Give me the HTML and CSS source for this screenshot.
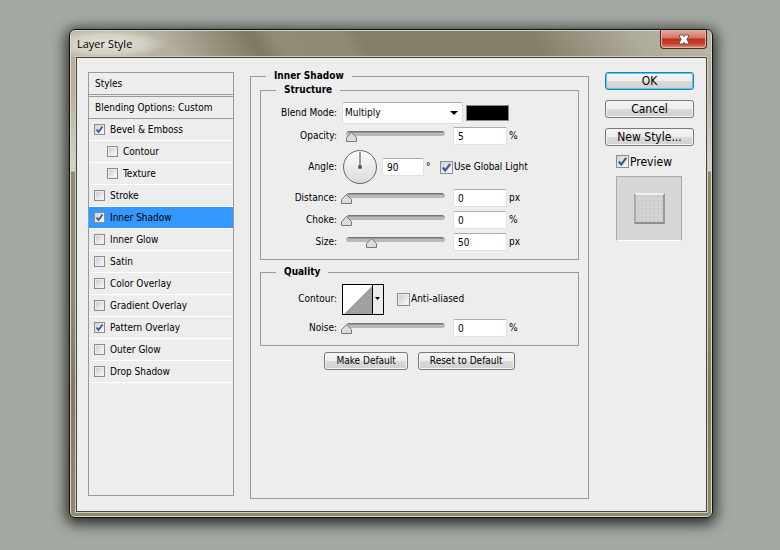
FILE: index.html
```html
<!DOCTYPE html>
<html lang="en">
<head>
<meta charset="utf-8">
<meta name="viewport" content="width=device-width, initial-scale=1">
<title>Layer Style</title>
<link rel="stylesheet" href="styles.css">
</head>
<body>
<main class="window">
  <header class="titlebar">
    <h1 class="title">Layer Style</h1>
    <button class="close" type="button" aria-label="Close">
      <svg width="12" height="11" viewBox="0 0 12 11"><path d="M1.500 1h3.500L6 2.700 7 1h3.500v2L8.700 5.500l1.800 2.500v2H7L6 8.300 5 10H1.500V8l1.800-2.500L1.500 3z" fill="#fff" stroke="#565a6b"/></svg>
    </button>
  </header>
  <form class="content">
    <nav class="styles" aria-label="Styles">
      <h2 class="styles-head">Styles</h2>
      <a class="blending" href="#">Blending Options: Custom</a>
      <ul class="effects">
        <li class="effect"><label><input type="checkbox" checked>Bevel &amp; Emboss</label></li>
        <li class="effect sub"><label><input type="checkbox">Contour</label></li>
        <li class="effect sub"><label><input type="checkbox">Texture</label></li>
        <li class="effect"><label><input type="checkbox">Stroke</label></li>
        <li class="effect selected"><label><input type="checkbox" checked>Inner Shadow</label></li>
        <li class="effect"><label><input type="checkbox">Inner Glow</label></li>
        <li class="effect"><label><input type="checkbox">Satin</label></li>
        <li class="effect"><label><input type="checkbox">Color Overlay</label></li>
        <li class="effect"><label><input type="checkbox">Gradient Overlay</label></li>
        <li class="effect"><label><input type="checkbox" checked>Pattern Overlay</label></li>
        <li class="effect"><label><input type="checkbox">Outer Glow</label></li>
        <li class="effect"><label><input type="checkbox">Drop Shadow</label></li>
      </ul>
    </nav>

    <fieldset class="settings">
      <legend>Inner Shadow</legend>
      <fieldset class="group structure">
        <legend>Structure</legend>
        <div class="row blend-row">
          <label class="name" for="blend">Blend Mode:</label>
          <select class="blend" id="blend"><option>Multiply</option></select>
          <button class="swatch" type="button" aria-label="Shadow color"></button>
        </div>
        <div class="row">
          <label class="name" for="opacity">Opacity:</label>
          <input class="slider" type="range" min="0" max="100" value="5" aria-label="Opacity">
          <input class="value" id="opacity" type="text" value="5"><span>%</span>
        </div>
        <div class="row angle-row">
          <label class="name" for="angle">Angle:</label>
          <svg class="dial" width="34" height="34" viewBox="0 0 34 34">
            <defs><linearGradient id="face" x2="0" y2="1"><stop stop-color="#fafafa"/><stop offset="1" stop-color="#dcdcdc"/></linearGradient></defs>
            <circle cx="17" cy="17" r="16.500" fill="url(#face)" stroke="#666"/>
            <path d="M17 2v15" stroke="#999" stroke-width="2"/><circle cx="17" cy="17" r="2" fill="#555"/>
          </svg>
          <input class="value short" id="angle" type="text" value="90"><span class="degree">°</span>
          <label class="check"><input type="checkbox" checked>Use Global Light</label>
        </div>
        <div class="row">
          <label class="name" for="distance">Distance:</label>
          <input class="slider" type="range" min="0" max="100" value="0" aria-label="Distance">
          <input class="value" id="distance" type="text" value="0"><span>px</span>
        </div>
        <div class="row">
          <label class="name" for="choke">Choke:</label>
          <input class="slider" type="range" min="0" max="100" value="0" aria-label="Choke">
          <input class="value" id="choke" type="text" value="0"><span>%</span>
        </div>
        <div class="row">
          <label class="name" for="size">Size:</label>
          <input class="slider" type="range" min="0" max="200" value="50" aria-label="Size">
          <input class="value" id="size" type="text" value="50"><span>px</span>
        </div>
      </fieldset>

      <fieldset class="group quality">
        <legend>Quality</legend>
        <div class="row contour-row">
          <label class="name" for="contour">Contour:</label>
          <button class="contour" id="contour" type="button" aria-label="Contour">
            <svg width="42" height="31" viewBox="0 0 42 31">
              <path d="M0 0h42v31H0z"/><path d="M1 1h29v29H1z" fill="#fff"/><path d="M2 30 30 2v28z" fill="#a0a0a0"/>
              <path d="M31 1h10v29H31z" fill="#ececec"/><path d="M33 13h5l-2.500 3z"/>
            </svg>
          </button>
          <label class="check"><input type="checkbox">Anti-aliased</label>
        </div>
        <div class="row">
          <label class="name" for="noise">Noise:</label>
          <input class="slider" type="range" min="0" max="100" value="0" aria-label="Noise">
          <input class="value" id="noise" type="text" value="0"><span>%</span>
        </div>
      </fieldset>

      <div class="defaults">
        <button class="button small" type="button">Make Default</button>
        <button class="button small" type="button">Reset to Default</button>
      </div>
    </fieldset>

    <aside class="actions">
      <button class="button primary" type="submit">OK</button>
      <button class="button" type="button">Cancel</button>
      <button class="button" type="button">New Style...</button>
      <div class="preview-block">
        <label class="check"><input type="checkbox" checked>Preview</label>
        <div class="preview"><div class="sample"></div></div>
      </div>
    </aside>
  </form>
</main>
</body>
</html>
```
FILE: styles.css
```css
* { box-sizing: border-box; }

body {
  display: flex;
  min-height: 100vh;
  margin: 0;
  padding: 29px 67px 32px 69px;
  background: #a3aaa2;
  color: #000;
  font: 10px/12px "DejaVu Sans Condensed", "DejaVu Sans", sans-serif;
}

input, select, button { margin: 0; font: inherit; color: inherit; }

.window {
  flex: 1;
  display: flex;
  flex-direction: column;
  padding: 0 5px 5px 6px;
  border: 1px solid #111;
  border-radius: 6px;
  background:
    radial-gradient(ellipse 60px 16px at 38px 14px, rgba(240, 238, 230, .8), rgba(240, 238, 230, .5) 60%, transparent) 0 0 / 100% 27px no-repeat,
    linear-gradient(60deg, #b9b4a3 0, #b4af9e 16%, #7f7a62 29%, #807b64 30%, #918c75 33%, #8f8a73 43%, #837e67 46%, #857f69 72%, #b0ac9b 88%, #b9b6a8) 0 0 / 100% 27px no-repeat,
    linear-gradient(#b4b09f 0, #b4b09f 60px, #d5d4ca 141px, #8e896f 142px, #8e896f 270px, #7f7a62 360px, #8e8a70);
  box-shadow: inset 0 0 0 1px #d9d7cc, 0 3px 14px 3px rgba(0, 0, 0, .75);
}

.titlebar {
  display: flex;
  justify-content: space-between;
  align-items: flex-start;
  height: 27px;
}

.title {
  margin: 0;
  padding: 5px 1px;
  font: 11px/18px "Open Sans", "Noto Sans", sans-serif;
}

.close {
  display: grid;
  place-items: center;
  width: 47px;
  height: 19px;
  padding: 0;
  border: 1px solid #55251f;
  border-top: 0;
  border-radius: 0 0 4px 4px;
  background: linear-gradient(#e5aaa0, #d07466 45%, #bd2e18 50%, #c7412a 75%, #df8d77);
  box-shadow: inset 0 0 0 1px #e5b1a8;
}

.content {
  flex: 1;
  display: grid;
  grid-template-columns: 146px 1fr 89px;
  column-gap: 16px;
  margin: 0;
  padding: 14px 12px 11px 11px;
  border: 1px solid #47463b;
  background: #ededed;
  box-shadow: 0 0 0 1px #cfcdbf;
}

.styles {
  margin-bottom: 4px;
  border: 1px solid #999;
}

.styles-head {
  height: 24px;
  margin: 0;
  padding: 0 6px;
  border-bottom: 3px double #999;
  font: inherit;
  line-height: 22px;
}

.blending {
  display: block;
  height: 22px;
  padding: 0 6px;
  border-bottom: 1px solid #999;
  color: inherit;
  line-height: 21px;
  text-decoration: none;
}

.effects { margin: 0; padding: 0; list-style: none; }
.effect { height: 22px; padding-left: 5px; border-bottom: 1px solid #fff; }
.effect label { display: flex; align-items: center; gap: 5px; height: 21px; }
.effect.sub { padding-left: 18px; }
.effect.selected { background: #39f; background-clip: padding-box; }

input[type="checkbox"] {
  appearance: none;
  flex: none;
  width: 11px;
  height: 11px;
  padding: 1px;
  border: 1px solid #8b8b8b;
  background: linear-gradient(135deg, #c9cdd3, #fafafa) content-box #f3f3f3;
}

input[type="checkbox"]:checked {
  background: url("data:image/svg+xml,%3Csvg xmlns='http://www.w3.org/2000/svg' viewBox='0 0 9 9'%3E%3Cpath d='M1.500 4.500 3.500 7 7.500 1.500' fill='none' stroke='%233b559c' stroke-width='1.800'/%3E%3C/svg%3E") center / 100% 100% no-repeat, linear-gradient(135deg, #d0d4da, #fafafa);
}

.check { display: flex; align-items: center; gap: 1px; }
.check input[type="checkbox"] { width: 13px; height: 13px; }

fieldset {
  min-width: 0;
  margin: 0;
  padding: 0;
  border: 1px solid #999;
}

legend { padding: 0 8px; font-weight: bold; }
.settings { margin: -2px 0 1px; padding: 0 9px; }
.settings > legend { margin-left: 6px; }
.group > legend { margin-left: 15px; }
.group { margin-top: 2px; }
.structure { padding: 4px 0 6px; }
.quality { margin-top: 6px; padding: 3px 0 6px; }

.row { display: flex; align-items: center; height: 22px; }
.name { width: 76px; margin-right: 4px; text-align: right; }
.blend-row { height: 25px; }

.blend {
  appearance: none;
  width: 121px;
  height: 22px;
  margin: 0 3px 0 1px;
  padding: 0 2px;
  border: 1px solid #dadde8;
  border-top-color: #aaadb5;
  border-radius: 2px;
  background: url("data:image/svg+xml,%3Csvg xmlns='http://www.w3.org/2000/svg' width='8' height='4'%3E%3Cpath d='M0 0h8L4 4z'/%3E%3C/svg%3E") right 4px center no-repeat #fff;
}

.swatch { width: 43px; height: 16px; padding: 0; border: 1px solid #888; background: #000; }

.slider {
  appearance: none;
  width: 110px;
  height: 18px;
  margin-right: 2px;
  background: url("data:image/svg+xml,%3Csvg xmlns='http://www.w3.org/2000/svg' width='99' height='5'%3E%3Crect width='99' height='5' rx='2.500' fill='%23b9b9b9'/%3E%3Cpath d='M2 .5h95' stroke='%23757575'/%3E%3Cpath d='M1 1.500h97' stroke='%23999'/%3E%3C/svg%3E") 5px 4px no-repeat;
}
.slider::-webkit-slider-runnable-track { height: 18px; }
.slider::-webkit-slider-thumb {
  appearance: none;
  width: 11px;
  height: 10px;
  margin-top: 5px;
  background: url("data:image/svg+xml,%3Csvg xmlns='http://www.w3.org/2000/svg' width='11' height='10'%3E%3Cpath d='M5.500 .7 10.500 5.500v4H.5v-4z' fill='%23ddd' stroke='%23777'/%3E%3C/svg%3E");
}

.value {
  width: 54px;
  height: 18px;
  margin-right: 2px;
  padding: 0 4px;
  border: 1px solid #dde2ea;
  border-top-color: #aaadb5;
  border-radius: 2px;
  background: #fff;
}
.value.short { width: 42px; }

.angle-row { height: 40px; }
.dial { margin: 0 5px 0 2px; }
.degree { width: 14px; }

.contour-row { height: 36px; }
.contour { height: 31px; margin: 0 13px 0 1px; padding: 0; border: 0; }
.contour svg { display: block; }

.defaults { display: flex; justify-content: center; gap: 10px; margin-top: 6px; }

.button {
  height: 18px;
  padding: 0;
  border: 1px solid #777;
  border-radius: 3px;
  background: linear-gradient(#f5f5f5, #ececec 50%, #dadada 51%, #d0d0d0);
  box-shadow: inset 0 0 0 1px #f6f6f6;
  font: 12px/14px "DejaVu Sans Condensed", "DejaVu Sans", sans-serif;
}
.button.small { padding: 0 11px; font-size: 10px; }
.button.primary { border-color: #3577a5; box-shadow: inset 0 0 0 1px #42d3fa; }

.actions { display: flex; flex-direction: column; gap: 10px; }
.preview-block {
  display: flex;
  flex-direction: column;
  align-items: flex-start;
  gap: 8px;
  margin-top: -1px;
  padding-left: 11px;
  font-size: 12px;
}

.preview {
  display: grid;
  place-items: center;
  width: 66px;
  height: 65px;
  border: 1px solid #aaa;
  border-bottom-color: #fff;
  background: #d6d6d6;
}
.sample {
  width: 31px;
  height: 31px;
  border: 2px solid #999;
  border-color: #eee #999 #8e8e8e #aaa;
  background: radial-gradient(#cbcbcb 1px, transparent 1px) 0 0 / 4px 4px #d3d3d3;
}
```
